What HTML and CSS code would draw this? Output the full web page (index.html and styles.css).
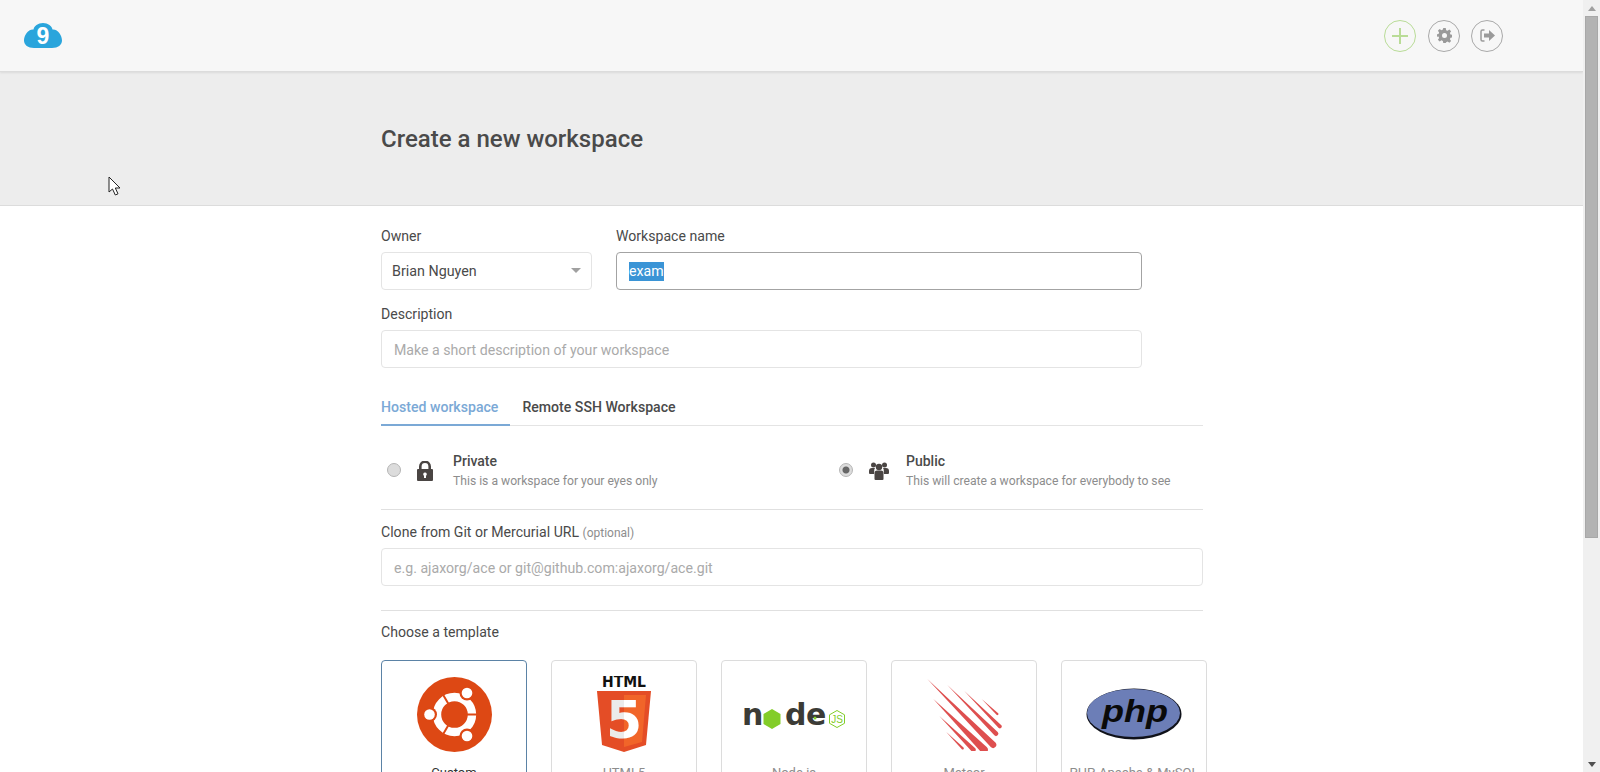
FILE: index.html
```html
<!DOCTYPE html>
<html lang="en">
<head>
  <meta charset="UTF-8">
  <title>Create a new workspace</title>
  <link rel="stylesheet" href="styles.css">
</head>
<body>

<div class="page">
  <header class="topbar">
    <svg class="logo" width="38" height="25" viewBox="0 0 38 25">
      <path fill="#2aa5dc" d="M10 25C4 25 0 22 0 17.500 0 12.500 4 6 9.500 6.500 10 3 14 0 19 0s9 3 9.500 6.500C34 6 38 12.500 38 17.500 38 22 34 25 28 25z"/>
      <text class="logo-nine" x="19" y="21" text-anchor="middle">9</text>
    </svg>
    <div class="top-actions">
      <a class="round-btn add">
        <svg width="16" height="16" viewBox="0 0 16 16"><path fill="#b9dc97" d="M7 0h2v7h7v2H9v7H7V9H0V7h7z"/></svg>
      </a>
      <a class="round-btn">
        <svg width="15" height="15" viewBox="0 0 24 24"><path fill="#9a9a9a" fill-rule="evenodd" d="M10 0h4l.6 3.400 2.300 1 2.900-2 2.800 2.800-2 2.900 1 2.300 3.400.6v4l-3.400.6-1 2.300 2 2.900-2.800 2.800-2.900-2-2.300 1L14 24h-4l-.6-3.400-2.300-1-2.900 2-2.800-2.800 2-2.900-1-2.300L-1 14v-4l3.400-.6 1-2.300-2-2.900 2.800-2.800 2.900 2 2.300-1zM12 8a4 4 0 1 0 0 8 4 4 0 0 0 0-8z"/></svg>
      </a>
      <a class="round-btn logout">
        <svg width="15" height="13" viewBox="0 0 15 13">
          <path fill="none" stroke="#9a9a9a" stroke-width="1.500" d="M4.500 1H2.500Q1 1 1 2.500v8Q1 12 2.500 12h2"/>
          <path fill="#9a9a9a" d="M4 4.500h5V1l6 5.500L9 12V8.500H4z"/>
        </svg>
      </a>
    </div>
  </header>

  <section class="band">
    <h1>Create a new workspace</h1>
  </section>

  <form class="form">
    <div class="row">
      <div class="field owner">
        <label>Owner</label>
        <div class="input select">Brian Nguyen<span class="caret"></span></div>
      </div>
      <div class="field name">
        <label>Workspace name</label>
        <div class="input focused"><span class="selected">exam</span></div>
      </div>
    </div>

    <div class="field desc">
      <label>Description</label>
      <div class="input placeholder">Make a short description of your workspace</div>
    </div>

    <div class="tabs">
      <span class="tab active">Hosted workspace</span>
      <span class="tab">Remote SSH Workspace</span>
    </div>

    <div class="options">
      <div class="option">
        <span class="radio"></span>
        <span class="option-icon">
          <svg width="16" height="20" viewBox="0 0 16 20">
            <path fill="none" stroke="#4a4543" stroke-width="2.600" d="M3.300 9V5.500a4.700 4.700 0 0 1 9.400 0V9"/>
            <path fill="#4a4543" fill-rule="evenodd" d="M1 8h14q1 0 1 1v10q0 1-1 1H1q-1 0-1-1V9q0-1 1-1zm7 3.500a1.800 1.800 0 0 0-1 3.300V17h2v-2.200a1.800 1.800 0 0 0-1-3.300z"/>
          </svg>
        </span>
        <div>
          <div class="option-title">Private</div>
          <div class="option-sub">This is a workspace for your eyes only</div>
        </div>
      </div>
      <div class="option public">
        <span class="radio checked"></span>
        <span class="option-icon">
          <svg width="20" height="18" viewBox="0 0 20 18" fill="#4a4543">
            <circle cx="4.500" cy="3" r="2.500"/>
            <circle cx="15.500" cy="3" r="2.500"/>
            <circle cx="10" cy="5" r="3.200"/>
            <path d="M0 9q0-3 3-3h3q-1 1-.8 3.500L5 12H1q-1 0-1-1zM20 9q0-3-3-3h-3q1 1 .8 3.500L15 12h4q1 0 1-1z"/>
            <path d="M5.500 11q0-2.500 2.500-2.500h4q2.500 0 2.500 2.500v6q0 1-1 1h-7q-1 0-1-1z"/>
          </svg>
        </span>
        <div>
          <div class="option-title">Public</div>
          <div class="option-sub">This will create a workspace for everybody to see</div>
        </div>
      </div>
    </div>

    <div class="field clone">
      <label>Clone from Git or Mercurial URL <small>(optional)</small></label>
      <div class="input placeholder">e.g. ajaxorg/ace or git@github.com:ajaxorg/ace.git</div>
    </div>

    <div class="templates">
      <label>Choose a template</label>
      <div class="cards">
        <div class="card active">
          <div class="card-logo">
            <svg width="75" height="75" viewBox="-37.500 -37.500 75 75">
              <circle r="37.500" fill="#dd4814"/>
              <circle r="17.500" fill="none" stroke="#fff" stroke-width="8.400"/>
              <path stroke="#dd4814" stroke-width="2" d="M12 0h12M-6 10.400l-6 10.400M-6-10.400l-6-10.400"/>
              <g fill="#dd4814">
                <circle cx="12.500" cy="-21.500" r="7.500"/>
                <circle cx="-25" cy="0" r="7.500"/>
                <circle cx="12.500" cy="21.500" r="7.500"/>
              </g>
              <g fill="#fff">
                <circle cx="12.500" cy="-21.500" r="5.300"/>
                <circle cx="-25" cy="0" r="5.300"/>
                <circle cx="12.500" cy="21.500" r="5.300"/>
              </g>
            </svg>
          </div>
          <div class="card-name">Custom</div>
        </div>
        <div class="card">
          <div class="card-logo">
            <svg width="54" height="76" viewBox="0 0 54 76">
              <defs>
                <linearGradient id="five">
                  <stop offset="0.500" stop-color="#ebebeb"/>
                  <stop offset="0.500" stop-color="#fff"/>
                </linearGradient>
              </defs>
              <text class="html-word" x="27" y="11" text-anchor="middle" textLength="44" lengthAdjust="spacingAndGlyphs">HTML</text>
              <path fill="#e44d26" d="M0 15h54l-5 54-22 7-22-7z"/>
              <path fill="#f16529" d="M27 19h22l-4 47-18 5z"/>
              <text class="html-five" x="27" y="62" text-anchor="middle" fill="url(#five)">5</text>
            </svg>
          </div>
          <div class="card-name">HTML5</div>
        </div>
        <div class="card">
          <div class="card-logo">
            <svg width="104" height="32" viewBox="0 0 104 32">
              <text class="node-word" x="0" y="27">n</text>
              <path fill="#83cd29" d="M30 11l8.500 5v10L30 31l-8.500-5V16z"/>
              <text class="node-word" x="43" y="27">d</text>
              <text class="node-word" x="64" y="27">e</text>
              <circle cx="73" cy="20" r="1.500" fill="#83cd29"/>
              <path fill="none" stroke="#83cd29" stroke-width="1" d="M95 12.500l7.500 4.300v8.500L95 29.500l-7.500-4.200v-8.500z"/>
              <text class="node-js" x="95" y="24.500" text-anchor="middle">JS</text>
            </svg>
          </div>
          <div class="card-name">Node.js</div>
        </div>
        <div class="card">
          <div class="card-logo">
            <svg width="76" height="73" viewBox="648 82 228 219" fill="#de4f4f">
              <path d="M815 145L864.500 187.500A3.500 3.500 0 0 1 859.500 192.500Z"/>
              <path d="M763 121L874 224A5.700 5.700 0 0 1 866 232Z"/>
              <path d="M712 103L863 244A7 7 0 0 1 853 254Z"/>
              <path d="M652 85L857 276A10 10 0 0 1 843 290Z"/>
              <path d="M670 145L830 289A11 11 0 0 1 814 305Z"/>
              <path d="M688 196L795 292A7 7 0 0 1 785 302Z"/>
              <path d="M708 243L760.500 290.500A3.500 3.500 0 0 1 755.500 295.500Z"/>
            </svg>
          </div>
          <div class="card-name">Meteor</div>
        </div>
        <div class="card">
          <div class="card-logo">
            <svg width="96" height="52" viewBox="0 0 96 52">
              <ellipse cx="48" cy="26" rx="47.500" ry="25.500" fill="#10121a"/>
              <ellipse cx="47.500" cy="25" rx="46.500" ry="24" fill="#6c7eb7"/>
              <text class="php-word" x="49" y="34" text-anchor="middle" textLength="66" lengthAdjust="spacingAndGlyphs">php</text>
            </svg>
          </div>
          <div class="card-name">PHP, Apache &amp; MySQL</div>
        </div>
      </div>
    </div>
  </form>

  <svg class="pointer" width="14" height="20" viewBox="0 0 14 20">
    <path fill="#fff" stroke="#222" stroke-width="1" d="M1 1v15l3.500-3 2.800 6 2.700-1.200-2.700-5.800H12z"/>
  </svg>
</div>

<div class="scrollbar">
  <span class="arrow up"></span>
  <div class="thumb"></div>
  <span class="arrow down"></span>
</div>

</body>
</html>
```

FILE: styles.css
```css
html, body {
  margin: 0;
  height: 772px;
  overflow: hidden;
}
body {
  display: flex;
  font-family: Roboto, Arial, sans-serif;
  font-size: 14px;
  color: #4a4a4a;
  background-color: white;
}
.page {
  position: relative;
  flex: 1;
  height: 772px;
  overflow: hidden;
}

/* top bar */
.topbar {
  display: flex;
  align-items: center;
  justify-content: space-between;
  height: 72px;
  box-sizing: border-box;
  padding: 0 80px 0 24px;
  background-color: #f7f7f7;
  border-bottom: 1px solid #dcdcdc;
  box-shadow: 0 1px 2px rgba(0,0,0,0.08);
  position: relative;
}
.logo-nine {
  font-family: "Liberation Sans", sans-serif;
  font-weight: bold;
  font-size: 23px;
  fill: white;
}
.top-actions {
  display: flex;
  gap: 12px;
}
.round-btn {
  display: flex;
  align-items: center;
  justify-content: center;
  width: 32px;
  height: 32px;
  box-sizing: border-box;
  border: 1px solid #a9a9a9;
  border-radius: 50%;
}
.round-btn.add {
  border-color: #b9dc97;
}
.round-btn.logout {
  margin-left: -1px;
}

/* grey title band */
.band {
  height: 134px;
  box-sizing: border-box;
  padding: 53px 0 0 381px;
  background-color: #ededed;
  border-bottom: 1px solid #dcdcdc;
}
.band h1 {
  margin: 0;
  font-size: 24px;
  line-height: 28px;
  font-weight: 500;
  color: #4a4a4a;
}

/* form */
.form {
  width: 822px;
  margin-left: 381px;
  padding-top: 20px;
}
.row {
  display: flex;
  gap: 24px;
}
label {
  display: block;
  font-size: 14.100px;
  line-height: 20px;
  color: #4a4a4a;
}
label small {
  font-size: 12px;
  color: #8d8d8d;
}
.input {
  display: flex;
  align-items: center;
  position: relative;
  box-sizing: border-box;
  height: 38px;
  margin-top: 6px;
  padding: 0 12px;
  font-size: 14.150px;
  color: #4a4a4a;
  background: white;
  border: 1px solid #e4e4e4;
  border-radius: 4px;
}
.owner .input {
  padding-left: 10px;
  font-size: 14.300px;
}
.name .input { padding-left: 12px; }
.placeholder {
  padding-top: 2px;
  color: #aaa;
}
.owner { width: 211px; }
.name { width: 526px; }
.desc {
  width: 761px;
  margin-top: 14px;
}
.focused {
  border-color: #a3a3a3;
}
.selected {
  background-color: #3a94d6;
  color: white;
  line-height: 19px;
}
.caret {
  position: absolute;
  right: 10px;
  top: 15px;
  border-left: 5px solid transparent;
  border-right: 5px solid transparent;
  border-top: 5px solid #a0a0a0;
}

/* tabs */
.tabs {
  display: flex;
  gap: 12px;
  margin-top: 29px;
  border-bottom: 1px solid #e4e4e4;
}
.tab {
  padding: 0 12px 7px 0;
  line-height: 20px;
  font-size: 14.100px;
  font-weight: 500;
  color: #4a4a4a;
  margin-bottom: -1px;
  border-bottom: 2px solid transparent;
}
.tab.active {
  color: #7ba9d6;
  border-bottom-color: #7ba9d6;
}

/* private / public */
.options {
  display: grid;
  grid-template-columns: 453px 1fr;
  padding: 25px 0 17px;
  border-bottom: 1px solid #e0e0e0;
}
.option {
  display: flex;
  align-items: center;
  padding-left: 6px;
}
.radio {
  width: 12px;
  height: 12px;
  box-sizing: content-box;
  flex: none;
  margin-top: -4px;
  border: 1px solid #b5b5b5;
  border-radius: 50%;
  background-color: #dcdcdc;
}
.radio.checked {
  background: radial-gradient(circle, #666 0 3px, #dcdcdc 4px);
}
.option-icon {
  display: flex;
  justify-content: center;
  width: 22px;
  margin: -2px 17px 0 13px;
  flex: none;
}
.public {
  padding-left: 5px;
}
.public .option-icon {
  margin: -2px 16px 0 15px;
}
.option-title {
  font-size: 14px;
  line-height: 20px;
  font-weight: 500;
  color: #4a4a4a;
}
.option-sub {
  font-size: 12.150px;
  line-height: 21px;
  color: #8d8d8d;
}

/* clone */
.clone {
  padding: 12px 0 24px;
  border-bottom: 1px solid #e0e0e0;
}
.clone .input {
  margin-top: 5px;
}

/* template cards */
.templates {
  padding-top: 11px;
}
.cards {
  display: flex;
  gap: 24px;
  width: 826px;
  margin-top: 18px;
}
.card {
  flex: none;
  width: 146px;
  height: 140px;
  box-sizing: border-box;
  border: 1px solid #dcdcdc;
  border-radius: 4px;
  text-align: center;
}
.card.active {
  border-color: #5b83a6;
}
.card-logo {
  display: flex;
  align-items: center;
  justify-content: center;
  height: 106px;
}
.card-name {
  margin-top: -2px;
  font-size: 13px;
  line-height: 16px;
  color: #8d8d8d;
}
.card.active .card-name {
  color: #333;
}
.html-word {
  font-family: "DejaVu Sans", sans-serif;
  font-weight: bold;
  font-size: 15px;
  fill: #111;
}
.html-five {
  font-family: "DejaVu Sans", sans-serif;
  font-weight: bold;
  font-size: 52px;
}
.node-word {
  font-family: "DejaVu Sans", sans-serif;
  font-weight: bold;
  font-size: 30px;
  fill: #3b3b36;
}
.node-js {
  font-family: "Liberation Sans", sans-serif;
  font-size: 10px;
  fill: #83cd29;
}
.php-word {
  font-family: "Liberation Sans", sans-serif;
  font-weight: bold;
  font-style: italic;
  font-size: 31px;
  fill: #0a0a0a;
}

/* mouse pointer in the capture */
.pointer {
  position: absolute;
  left: 108px;
  top: 176px;
}

/* scrollbar */
.scrollbar {
  display: flex;
  flex-direction: column;
  align-items: center;
  flex: none;
  width: 17px;
  height: 772px;
  background-color: #f0f0f0;
}
.arrow {
  flex: none;
  margin: 6px 0 5px;
  border-left: 4px solid transparent;
  border-right: 4px solid transparent;
}
.arrow.up {
  border-bottom: 5px solid #a0a0a0;
}
.arrow.down {
  margin-top: auto;
  border-top: 5px solid #505050;
}
.thumb {
  width: 13px;
  height: 522px;
  box-sizing: border-box;
  background-color: #b3b3b3;
  border: 1px solid #a8a8a8;
}
```
